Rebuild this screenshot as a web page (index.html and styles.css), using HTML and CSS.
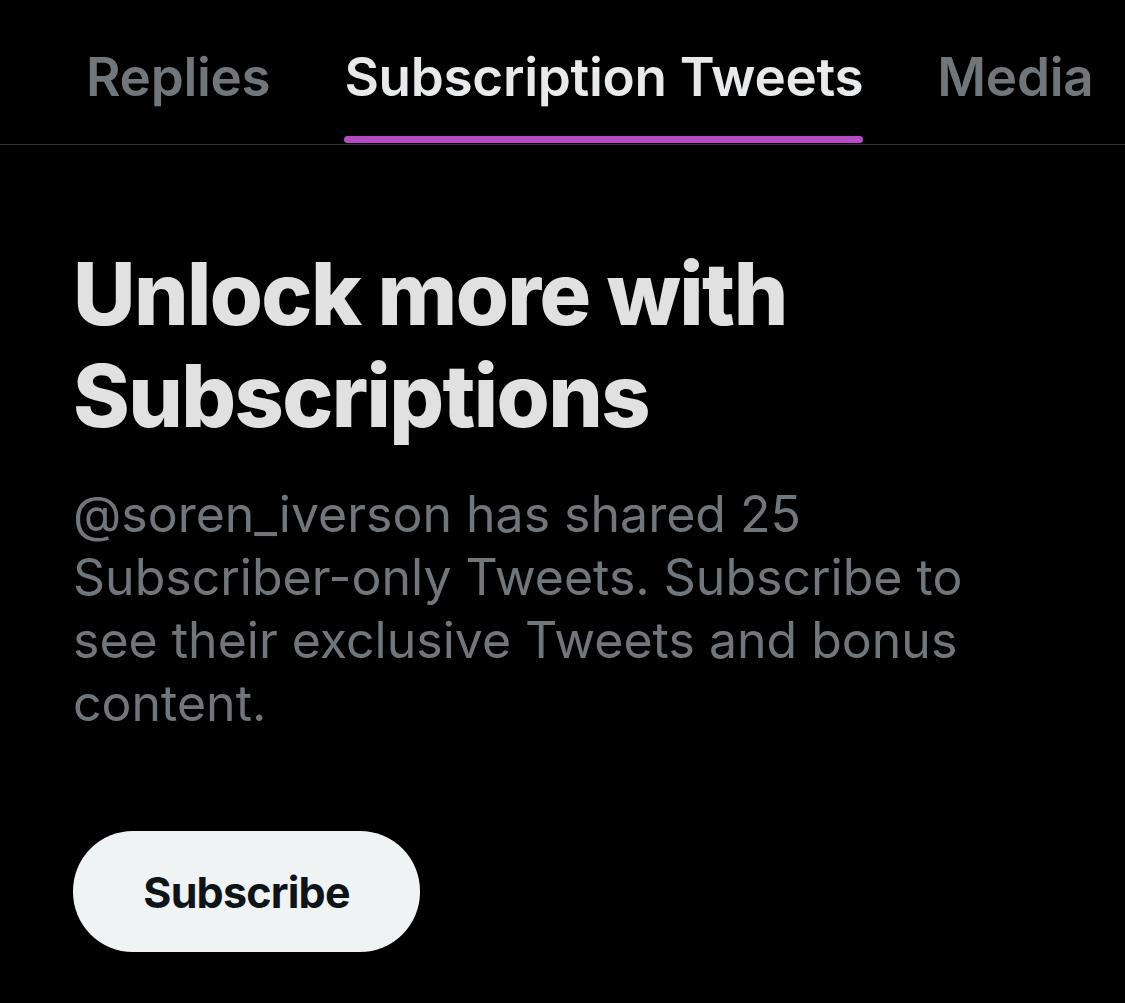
FILE: index.html
```html
<!DOCTYPE html>
<html lang="en">
<head>
<meta charset="utf-8">
<link rel="stylesheet" href="styles.css">
</head>
<body>
<div class="page">
  <nav class="tabs">
    <div class="tab"><span class="tab-label">Replies</span></div>
    <div class="tab active"><span class="tab-label">Subscription Tweets</span><span class="indicator"></span></div>
    <div class="tab"><span class="tab-label">Media</span></div>
  </nav>
  <section class="content">
    <h1 class="title">Unlock more with Subscriptions</h1>
    <p class="desc">@soren_iverson has shared 25 Subscriber-only Tweets. Subscribe to see their exclusive Tweets and bonus content.</p>
    <button class="subscribe">Subscribe</button>
  </section>
</div>
</body>
</html>
```

FILE: styles.css
```css
html, body {
  margin: 0;
  padding: 0;
  background: #000;
}
body {
  font-family: Inter, "Noto Sans", "Liberation Sans", sans-serif;
  color: #e7e9ea;
  width: 1125px;
  height: 1003px;
  overflow: hidden;
}
.page {
  display: flex;
  flex-direction: column;
}
.tabs {
  display: flex;
  flex-wrap: nowrap;
  height: 144px;
  border-bottom: 1px solid #2f3336;
  padding-left: 49px;
  box-sizing: content-box;
  white-space: nowrap;
}
.tab {
  position: relative;
  display: flex;
  align-items: flex-start;
  padding: 0 37px;
  flex-shrink: 0;
}
.tab-label {
  font-size: 53px;
  font-weight: 600;
  line-height: 60px;
  margin-top: 47px;
  color: #71767b;
  letter-spacing: -0.3px;
}
.tab.active .tab-label {
  color: #e7e9ea;
}
.indicator {
  position: absolute;
  left: 37px;
  right: 37px;
  bottom: 1px;
  height: 7px;
  border-radius: 4px;
  background: #b94ac6;
}
.content {
  padding: 0 0 0 73px;
}
.title {
  margin: 0;
  margin-top: 98px;
  font-size: 86px;
  line-height: 102px;
  font-weight: 800;
  letter-spacing: -1.6px;
  color: #e1e1e1;
  width: 900px;
}
.desc {
  margin: 36px 0 0;
  font-size: 50px;
  line-height: 63px;
  font-weight: 400;
  color: #71767b;
  width: 940px;
}
.subscribe {
  margin-top: 96px;
  width: 347px;
  height: 121px;
  border: none;
  border-radius: 60px;
  background: #eff3f4;
  color: #0f1419;
  font-family: Inter, "Noto Sans", "Liberation Sans", sans-serif;
  font-size: 43px;
  font-weight: 700;
  letter-spacing: -0.8px;
  padding: 0;
}
```
